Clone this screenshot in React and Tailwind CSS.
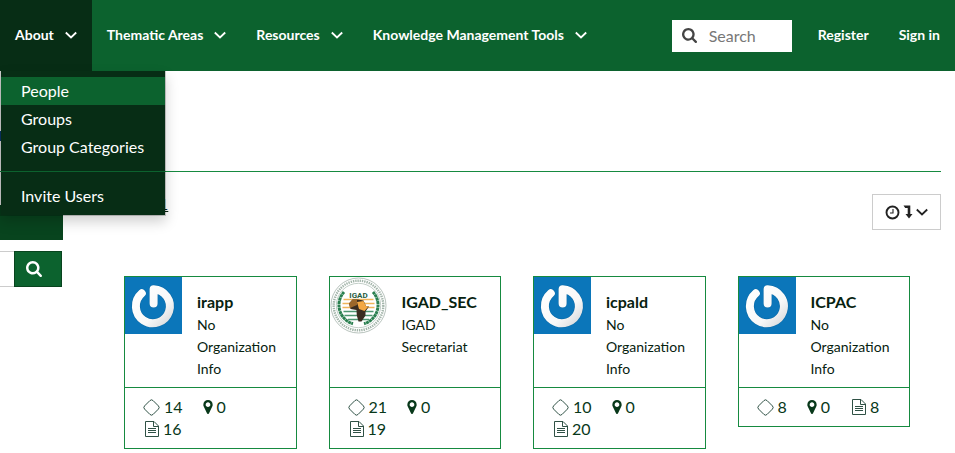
import React from "react";

const NAV = ["About", "Thematic Areas", "Resources", "Knowledge Management Tools"];

const PEOPLE = [
  { name: "irapp", org: "No Organization Info", resources: 14, maps: 0, docs: 16, avatar: "power" },
  { name: "IGAD_SEC", org: "IGAD Secretariat", resources: 21, maps: 0, docs: 19, avatar: "igad" },
  { name: "icpald", org: "No Organization Info", resources: 10, maps: 0, docs: 20, avatar: "power" },
  { name: "ICPAC", org: "No Organization Info", resources: 8, maps: 0, docs: 8, avatar: "power" },
];

function SearchIcon({ className }) {
  return (
    <svg viewBox="64 128 1664 1664" className={className} fill="currentColor" aria-hidden="true">
      <path d="M1216 832q0-185-131.5-316.5t-316.5-131.5-316.5 131.5-131.5 316.5 131.5 316.5 316.5 131.5 316.5-131.5 131.5-316.5zm512 832q0 52-38 90t-90 38q-54 0-90-38l-343-342q-179 124-399 124-143 0-273.5-55.5t-225-150-150-225-55.5-273.5 55.5-273.5 150-225 225-150 273.5-55.5 273.5 55.5 225 150 150 225 55.5 273.5q0 220-124 399l343 343q37 37 37 90z" />
    </svg>
  );
}

function Chevron({ className }) {
  return (
    <svg viewBox="0 0 12 8" className={className} fill="none" stroke="currentColor" strokeWidth="1.8" aria-hidden="true">
      <path d="M.8 1.5 6 6.5 11.2 1.5" />
    </svg>
  );
}

function DiamondIcon() {
  return (
    <svg viewBox="0 0 17 17" className="size-[17px]" fill="none" stroke="#2f5145" aria-hidden="true">
      <path d="M6.9 1.6Q8.5 0 10.1 1.6L15.4 6.9Q17 8.5 15.4 10.1L10.1 15.4Q8.5 17 6.9 15.4L1.6 10.1Q0 8.5 1.6 6.9Z" />
    </svg>
  );
}

function PinIcon() {
  return (
    <svg viewBox="384 128 1024 1536" className="h-[14px] w-[10px]" fill="currentColor" aria-hidden="true">
      <path d="M1152 640q0-106-75-181t-181-75-181 75-75 181 75 181 181 75 181-75 75-181zm256 0q0 109-33 179l-364 774q-16 33-47.5 52t-67.5 19-67.5-19-46.5-52l-365-774q-33-70-33-179 0-212 150-362t362-150 362 150 150 362z" />
    </svg>
  );
}

function DocIcon() {
  return (
    <svg viewBox="0 0 16 16" className="size-4" fill="none" stroke="#2f5145" aria-hidden="true">
      <path d="M2.5.5H11L15.5 5V15.5H2.5ZM10.5.5V5.5H15.5M5 7.5H13M5 9.5H13M5 11.5H13" />
    </svg>
  );
}

function PowerAvatar() {
  return (
    <svg viewBox="0 0 57 57" className="block size-[57px]" role="img" aria-label="Default avatar">
      <defs>
        <linearGradient id="ring" x1="0" y1="0" x2="1" y2="1">
          <stop offset="0" stopColor="#fff" />
          <stop offset=".65" stopColor="#f8f8f8" />
          <stop offset="1" stopColor="#d9dbdd" />
        </linearGradient>
      </defs>
      <rect width="57" height="57" fill="#0b76ba" />
      <g fill="none" strokeLinecap="round" strokeLinejoin="round">
        <path d="M16.8 16.3A17 17 0 1 0 28.6 12.2V26.5" stroke="#075f98" strokeWidth="9" opacity=".55" />
        <path d="M16.8 16.3A17 17 0 1 0 28.6 12.2V26.5" stroke="url(#ring)" strokeWidth="8" />
      </g>
    </svg>
  );
}

function IgadAvatar() {
  return (
    <svg viewBox="0 0 57 57" className="block size-[57px]" role="img" aria-label="IGAD emblem">
      <g fill="none">
        <circle cx="28.5" cy="28.5" r="27.5" stroke="#b9c4be" strokeWidth="1" />
        <circle cx="28.5" cy="28.5" r="24.8" stroke="#a3b5aa" strokeWidth="2.4" strokeDasharray="1.4 .9" />
        <circle cx="28.5" cy="28.5" r="22.2" stroke="#b4c3ba" strokeWidth=".8" />
        <path d="M14 15A19.5 19.5 0 0 0 23 46.8M43 15A19.5 19.5 0 0 1 34 46.8" stroke="#2b8050" strokeWidth="3" strokeDasharray="3 .4" />
        <path d="M13.5 22.5H43.5M12.5 26.5H44.5M12.5 30.5H44.5" stroke="#efb55b" strokeWidth="1.6" />
        <path d="M13.5 34.5H43.5M14.5 38.5H42.5M18 42.5H39" stroke="#4d9670" strokeWidth="1.6" />
      </g>
      <text x="28.5" y="20.5" textAnchor="middle" fontSize="8" fontWeight="700" fill="#275d42" className="font-[Roboto,sans-serif]">IGAD</text>
      <path d="M19 26.5 22.5 22.5 28 22.5 33.5 23.5 36 29 39 29.5 35.5 34.5 35.5 38.5 31.5 44.5 28.5 44.5 26.8 38.5 26.5 33 20.5 32Z" fill="#3a2c20" />
      <path d="M27 25 33.5 24 36 29 38.5 29.5 34.5 34 29 32Z" fill="#f3a743" />
      <path d="M19 26.5 22.5 22.5 27 22.8 27 28 20 31Z" fill="#9c672b" />
    </svg>
  );
}

function Stat({ label, icon, value }) {
  return (
    <a href="#" aria-label={label} className="flex items-center gap-1">
      {icon}
      <span>{value}</span>
    </a>
  );
}

function PersonCard({ person }) {
  return (
    <article className="border border-[#168a40] bg-white">
      <div className="flex h-[111px] border-b border-[#168a40]">
        <a href="#" className="shrink-0">
          {person.avatar === "igad" ? <IgadAvatar /> : <PowerAvatar />}
        </a>
        <div className="min-w-0 flex-1 pt-[13px] pr-3 pl-[15px]">
          <h4 className="text-base leading-6 font-bold">
            <a href="#">{person.name}</a>
          </h4>
          <p className="text-sm leading-[22px]">{person.org}</p>
        </div>
      </div>
      <div className="flex flex-wrap gap-x-5 px-[18px] py-2 text-base leading-[22px] text-[#08381a]">
        <Stat label="Resources" icon={<DiamondIcon />} value={person.resources} />
        <Stat label="Maps" icon={<PinIcon />} value={person.maps} />
        <Stat label="Documents" icon={<DocIcon />} value={person.docs} />
      </div>
    </article>
  );
}

function AboutMenu() {
  return (
    <ul className="absolute top-full left-0 z-10 w-[166px] border border-t-0 border-black/20 bg-[#072d15] bg-clip-padding pt-1.5 pb-[5px] text-base leading-[28px] font-normal shadow-[0_6px_12px_rgba(0,0,0,0.18)]">
      <li><a href="#" className="block bg-[#0c622e] px-5">People</a></li>
      <li><a href="#" className="block px-5">Groups</a></li>
      <li><a href="#" className="block px-5">Group Categories</a></li>
      <li role="separator" className="my-[10px] h-px bg-[#0c622e]" />
      <li><a href="#" className="block px-5">Invite Users</a></li>
    </ul>
  );
}

export default function App() {
  return (
    <div className="overflow-x-hidden bg-white text-[#07220f]" style={{ fontFamily: 'Lato, "Liberation Sans", sans-serif' }}>
      <header className="flex h-[71px] items-center justify-between bg-[#0c622e] text-sm font-bold text-white">
        <nav className="h-full">
          <ul className="flex h-full">
            {NAV.map((label, i) => (
              <li key={label} className={i === 0 ? "relative bg-[#072d15]" : ""}>
                <a href="#" className="flex h-full items-center gap-[11px] px-[15px] pb-0.5 whitespace-nowrap">
                  {label}
                  <Chevron className="h-2 w-3" />
                </a>
                {i === 0 && <AboutMenu />}
              </li>
            ))}
          </ul>
        </nav>
        <div className="flex items-center">
          <label className="mr-[11px] flex h-8 w-[120px] items-center gap-3 bg-white px-[10px] text-[#444]">
            <SearchIcon className="size-[15px] shrink-0" />
            <input type="text" aria-label="Search" placeholder="Search" className="w-full min-w-0 text-base font-normal outline-none placeholder:text-[#777]" />
          </label>
          <a href="#" className="px-[15px] pb-0.5">Register</a>
          <a href="#" className="px-[15px] pb-0.5 whitespace-nowrap">Sign in</a>
        </div>
      </header>

      <main className="pr-[14px]">
        <div className="flex h-[101px] items-center border-b border-[#168a40] pt-[30px]">
          <span className="h-2.5 w-px bg-[#0b3f7a]" />
        </div>
        <div className="flex pt-[22px]">
          <aside className="w-[124px] shrink-0">
            <button className="mt-[11px] block h-[35px] w-[63px] bg-[#08441e]" aria-label="Filters" />
            <form className="mt-[11px] flex h-9 w-[62px]">
              <input type="text" aria-label="Search by name" className="w-[14px] border-y border-[#ccc] outline-none" />
              <button type="button" aria-label="Search" className="flex flex-1 items-center border border-[#08441e] bg-[#0c622e] pl-[11px] text-white">
                <SearchIcon className="size-4" />
              </button>
            </form>
          </aside>
          <section className="min-w-0 flex-1">
            <div className="flex items-start justify-between">
              <a href="#" className="ml-[35px] text-base leading-5 underline">1</a>
              <button aria-label="Sort by date" className="flex h-9 w-[69px] items-center justify-center gap-[3px] border border-[#ccc] text-[#222]">
                <svg viewBox="0 0 15 15" className="size-[15px]" fill="none" stroke="currentColor" aria-hidden="true">
                  <circle cx="7.5" cy="7.5" r="6" strokeWidth="1.9" />
                  <path d="M8 4V8H5" strokeWidth="1.1" />
                </svg>
                <svg viewBox="0 0 10 14" className="h-[14px] w-[10px]" fill="currentColor" aria-hidden="true">
                  <path d="M.5 .5H7.3V9H9.5L6 13.5 2.5 9H4.7V3H2.2Z" />
                </svg>
                <Chevron className="h-2 w-3" />
              </button>
            </div>
            <div className="mt-[46px] mr-[31px] grid grid-cols-4 items-start gap-8">
              {PEOPLE.map((p) => <PersonCard key={p.name} person={p} />)}
            </div>
          </section>
        </div>
      </main>
    </div>
  );
}
